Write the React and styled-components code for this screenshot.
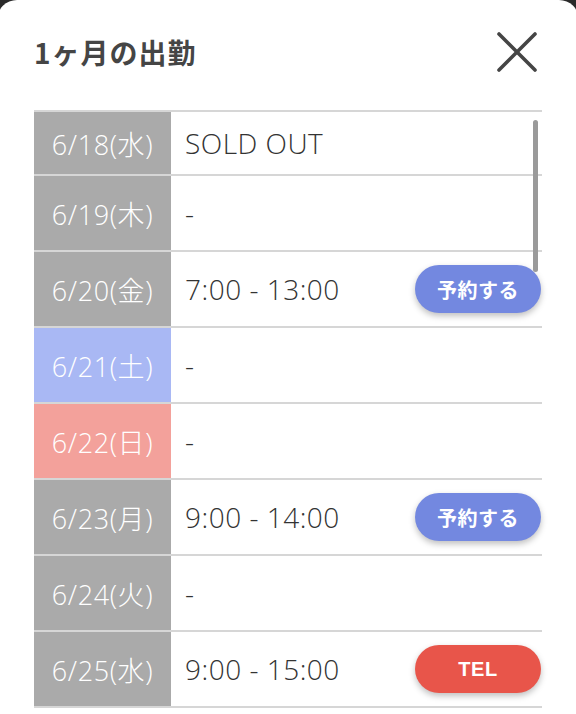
import React from "react";
import styled, { createGlobalStyle } from "styled-components";

const GlobalStyle = createGlobalStyle`
  html, body {
    margin: 0;
    padding: 0;
    background: #2a2a2a;
  }
  body {
    font-family: "Open Sans", "Noto Sans CJK JP", sans-serif;
  }
`;

const schedule = [
  { date: "6/18(水)", text: "SOLD OUT", kind: "weekday", first: true },
  { date: "6/19(木)", text: "-", kind: "weekday" },
  { date: "6/20(金)", text: "7:00 - 13:00", kind: "weekday", action: "reserve" },
  { date: "6/21(土)", text: "-", kind: "sat" },
  { date: "6/22(日)", text: "-", kind: "sun" },
  { date: "6/23(月)", text: "9:00 - 14:00", kind: "weekday", action: "reserve" },
  { date: "6/24(火)", text: "-", kind: "weekday" },
  { date: "6/25(水)", text: "9:00 - 15:00", kind: "weekday", action: "tel" },
];

const dayColors = {
  weekday: "#aaaaaa",
  sat: "#a9b8f4",
  sun: "#f3a19b",
};

export default function App() {
  return (
    <>
      <GlobalStyle />
      <Sheet>
        <Header>
          <Title>1ヶ月の出勤</Title>
          <CloseButton aria-label="close">
            <svg width="42" height="42" viewBox="0 0 42 42">
              <path
                d="M3 3 L39 39 M39 3 L3 39"
                stroke="#454545"
                strokeWidth="3.6"
                strokeLinecap="round"
              />
            </svg>
          </CloseButton>
        </Header>

        <Table>
          {schedule.map((row) => (
            <Row key={row.date} $first={row.first}>
              <DateCell $bg={dayColors[row.kind]}>{row.date}</DateCell>
              <Content>
                <span>{row.text}</span>
                {row.action === "reserve" && <Pill $bg="#7388e0">予約する</Pill>}
                {row.action === "tel" && <Pill $bg="#e8554a">TEL</Pill>}
              </Content>
            </Row>
          ))}
          <ScrollThumb />
        </Table>
      </Sheet>
    </>
  );
}

const Sheet = styled.div`
  background: #fff;
  width: calc(100% + 6px);
  margin-left: -3px;
  height: 714px;
  border-radius: 20px 20px 0 0;
  padding: 0 37px;
  box-sizing: border-box;
  overflow: hidden;
`;

const Header = styled.div`
  height: 110px;
  display: flex;
  align-items: center;
  justify-content: space-between;
  padding-bottom: 6px;
  box-sizing: border-box;
`;

const Title = styled.h1`
  margin: 0;
  font-family: "Noto Sans CJK JP", sans-serif;
  font-size: 28px;
  font-weight: 700;
  color: #454545;
  letter-spacing: 1px;
`;

const CloseButton = styled.button`
  border: none;
  background: none;
  padding: 0;
  margin-right: 4px;
  display: flex;
  cursor: pointer;
`;

const Table = styled.div`
  position: relative;
  border-top: 2px solid #d6d6d6;
  display: flex;
  flex-direction: column;
`;

const Row = styled.div`
  display: flex;
  height: ${(p) => (p.$first ? "62px" : "74px")};
  border-bottom: 2px solid #d6d6d6;
`;

const DateCell = styled.div`
  width: 137px;
  flex-shrink: 0;
  background: ${(p) => p.$bg};
  color: #fff;
  font-size: 27px;
  font-weight: 300;
  letter-spacing: 0.6px;
  display: flex;
  align-items: center;
  justify-content: center;
`;

const Content = styled.div`
  flex: 1;
  display: flex;
  align-items: center;
  justify-content: space-between;
  padding-left: 14px;
  font-size: 28px;
  font-weight: 300;
  letter-spacing: 0.5px;
  color: #333;
`;

const Pill = styled.button`
  width: 126px;
  height: 48px;
  margin-right: 1px;
  border: none;
  border-radius: 24px;
  background: ${(p) => p.$bg};
  color: #fff;
  font-family: "Liberation Sans", "Noto Sans CJK JP", sans-serif;
  font-size: 20px;
  font-weight: 700;
  letter-spacing: 0.5px;
  box-shadow: 0 3px 6px rgba(0, 0, 0, 0.25);
  cursor: pointer;
`;

const ScrollThumb = styled.div`
  position: absolute;
  right: 4px;
  top: 8px;
  width: 5px;
  height: 152px;
  border-radius: 3px;
  background: #9a9a9a;
`;
